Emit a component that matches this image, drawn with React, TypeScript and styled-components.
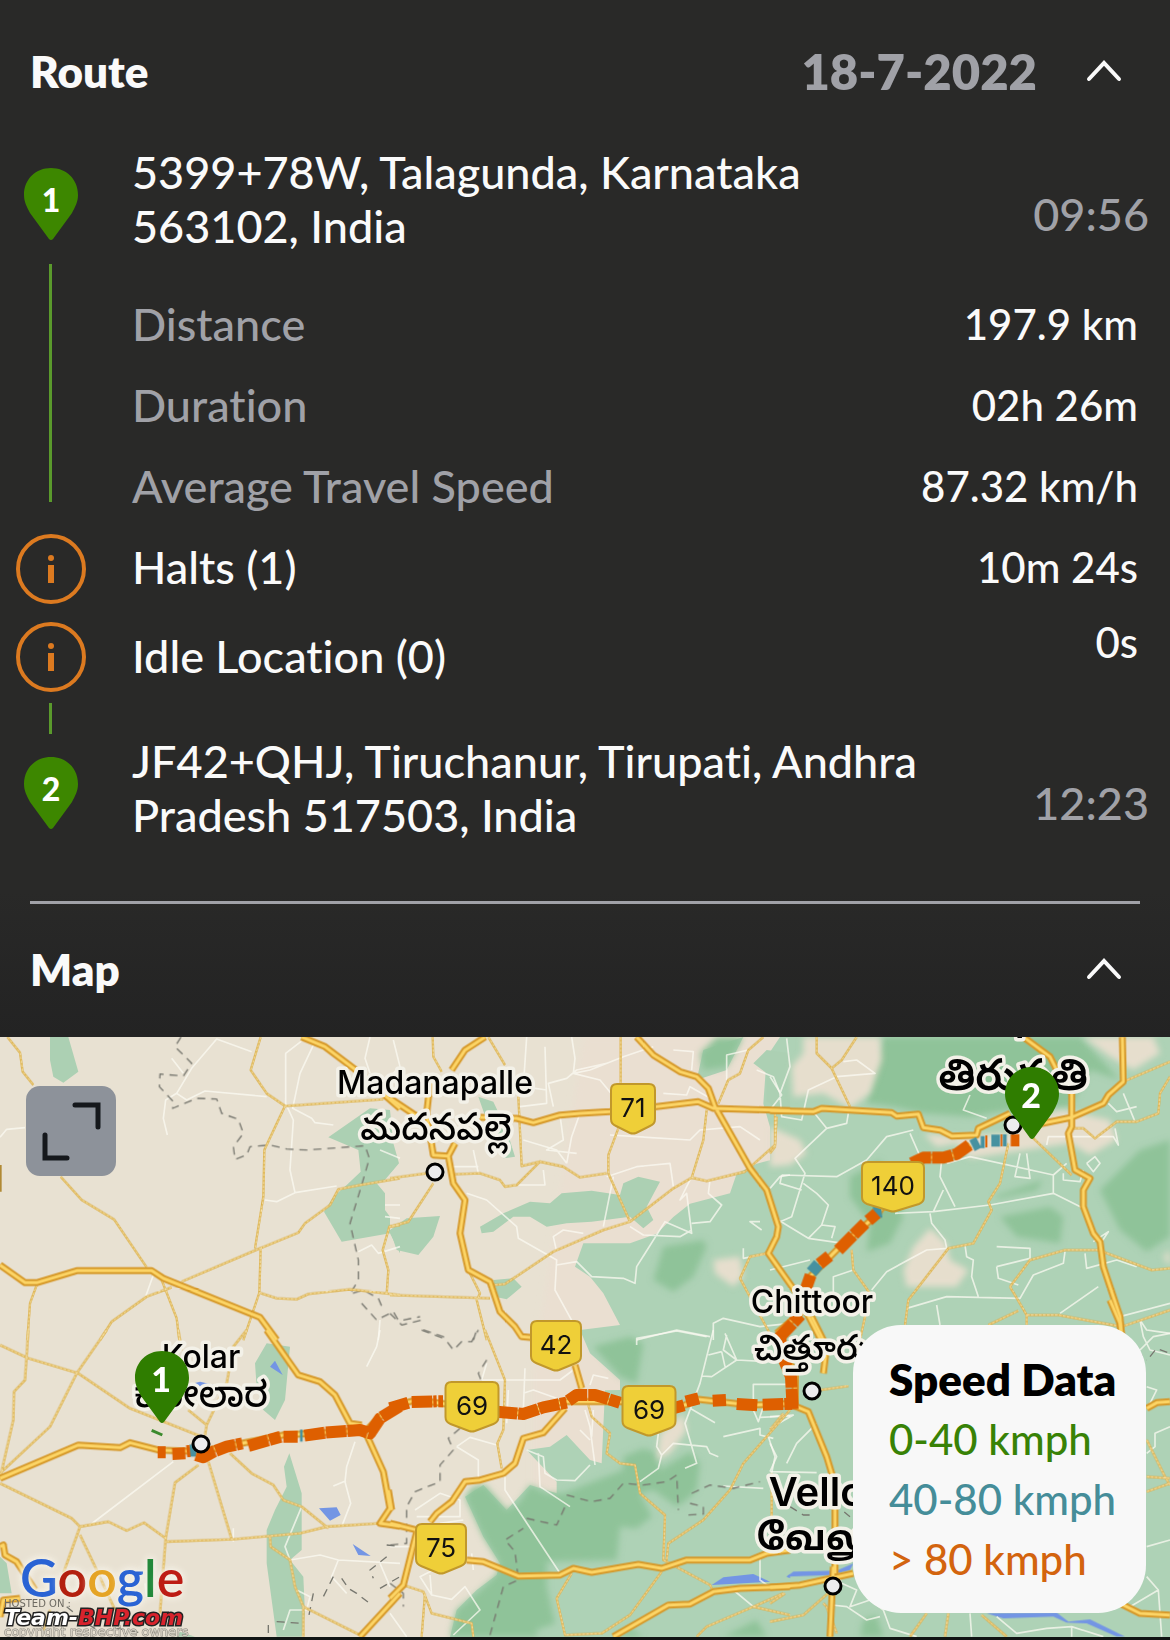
import React, { useState } from "react";
import styled, { createGlobalStyle } from "styled-components";

const color = {
  panel: "#292928",
  panelLow: "#232323",
  text: "#fafafa",
  muted: "#a0a1a7",
  green: "#3d8700",
  rail: "#5a9a2c",
  info: "#dc7a20",
  fast: "#de5f00",
  medium: "#4691a0",
};

const GlobalStyle = createGlobalStyle`
  *, *::before, *::after { box-sizing: border-box; }
  body {
    margin: 0;
    background: #101413;
    color: ${color.text};
    font-family: Lato, "Noto Sans", sans-serif;
    font-variant-ligatures: none;
  }
`;

const Page = styled.main`
  padding-bottom: 3px;
`;

const Panel = styled.div`
  background: linear-gradient(${color.panel} 86%, ${color.panelLow});
`;

const SectionHeader = styled.header<{ $height: number }>`
  display: flex;
  align-items: center;
  height: ${(p) => p.$height}px;
  padding: 0 48px 4px 30px;
`;

const SectionTitle = styled.h2`
  flex: 1;
  margin: 0;
  font-size: 44px;
  line-height: 54px;
  font-weight: 800;
`;

const RouteDate = styled.time`
  margin-right: 49px;
  font-size: 49px;
  line-height: 54px;
  font-weight: 800;
  color: ${color.muted};
`;

const Toggle = styled.button<{ $open: boolean }>`
  display: flex;
  padding: 0;
  border: 0;
  background: none;
  color: ${color.text};
  cursor: pointer;
  svg { transform: ${(p) => (p.$open ? "none" : "rotate(180deg)")}; }
`;

const Row = styled.div<{ $height?: number }>`
  display: grid;
  grid-template-columns: 101px 1fr auto;
  align-items: center;
  min-height: ${(p) => p.$height ?? 81}px;
  padding-right: 32px;
`;

const StopRow = styled(Row)`
  align-items: start;
  min-height: 108px;
  padding-right: 21px;
`;

const RailCell = styled.div`
  display: flex;
  justify-content: center;
`;

const PinCell = styled(RailCell)`
  padding-top: 23px;
`;

const IconCell = styled(RailCell)`
  padding-top: 3px;
`;

const Cell = styled.div<{ $muted?: boolean }>`
  grid-column: 2;
  padding-left: 31px;
  font-size: 45px;
  line-height: 54px;
  font-weight: 500;
  color: ${(p) => (p.$muted ? color.muted : color.text)};
`;

const Address = styled(Cell)`
  max-width: 832px;
`;

const Value = styled.div<{ $raised?: boolean }>`
  font-size: 42px;
  line-height: 54px;
  font-weight: 500;
  padding-bottom: ${(p) => (p.$raised ? 28 : 0)}px;
`;

const StopTime = styled.time`
  margin-top: 42px;
  font-size: 45px;
  line-height: 54px;
  font-weight: 500;
  color: ${color.muted};
`;

const Leg = styled.div`
  display: grid;
  grid-template-columns: 101px 1fr;
`;

const LegStats = styled.div`
  padding-top: 30px;
`;

const StatRow = styled.div`
  display: flex;
  align-items: center;
  justify-content: space-between;
  height: 81px;
  padding-right: 32px;
`;

const Rail = styled.span`
  width: 3px;
  margin: 11px 0 24px;
  background: ${color.rail};
`;

const ShortRail = styled.div`
  display: flex;
  justify-content: center;
  width: 101px;
  height: 31px;
  &::before {
    content: "";
    width: 3px;
    background: ${color.rail};
  }
`;

const Divider = styled.hr`
  height: 3px;
  margin: 59px 30px 0;
  border: 0;
  background: ${color.muted};
`;

const MapFrame = styled.section`
  position: relative;
  aspect-ratio: 1170 / 600;
  overflow: hidden;
  background: #e8e1d2;
`;

const MapLayer = styled.svg`
  position: absolute;
  inset: 0;
  width: 100%;
  height: 100%;
`;

const ExpandButton = styled.button`
  position: absolute;
  left: 26px;
  top: 49px;
  width: 90px;
  height: 90px;
  padding: 0;
  border: 0;
  border-radius: 14px;
  background: #8d929a;
  color: #15181c;
  cursor: pointer;
`;

const Legend = styled.aside`
  position: absolute;
  right: 24px;
  bottom: 24px;
  min-width: 293px;
  padding: 24px 24px 24px 36px;
  border-radius: 48px;
  background: #f8f8f8;
`;

const LegendTitle = styled.h3`
  margin: 0;
  font-size: 44px;
  line-height: 60px;
  font-weight: 800;
  color: #000;
  white-space: nowrap;
`;

const LegendList = styled.ul`
  margin: 0;
  padding: 0;
  list-style: none;
`;

const LegendItem = styled.li<{ $tone: string }>`
  font-size: 42px;
  line-height: 60px;
  font-weight: 500;
  color: ${(p) => p.$tone};
  white-space: nowrap;
`;

const Attribution = styled.div`
  position: absolute;
  left: 4px;
  bottom: 0;
`;

const Brand = styled.div`
  padding-left: 16px;
  font-size: 52px;
  line-height: 44px;
  font-weight: 600;
  text-shadow: 0 0 4px #f4f0e6, 0 0 6px #f4f0e6, 0 0 8px #f4f0e6;
`;

const BrandLetter = styled.span<{ $tone: string }>`
  color: ${(p) => p.$tone};
`;

const HostNote = styled.div`
  font: 10px/10px "DejaVu Sans", sans-serif;
  color: #6d6a62;
`;

const HostName = styled.div`
  font: italic bold 22px/17px "DejaVu Sans", sans-serif;
  color: #fff;
  -webkit-text-stroke: 3px #222;
  paint-order: stroke fill;
  em { color: #d8232c; }
`;

const Owners = styled.div`
  font: 13px/11px "DejaVu Sans", sans-serif;
  color: #d5d0c4;
  -webkit-text-stroke: 1px #8b877e;
  paint-order: stroke fill;
`;

const Chevron = () => (
  <svg width="36" height="24" viewBox="0 0 36 24" aria-hidden="true">
    <path d="M3 20 18 4l15 16" fill="none" stroke="currentColor" strokeWidth="4" strokeLinecap="round" />
  </svg>
);

const pinShape = "M27 0C12 0 0 11 0 27c0 7 3 12 6 18l19 26q2 2 4 0l19-26c3-6 6-11 6-18C54 11 42 0 27 0Z";

const Pin = ({ label }: { label: string }) => (
  <svg width="54" height="72" viewBox="0 0 54 72">
    <path d={pinShape} fill={color.green} />
    <text x="27" y="44" textAnchor="middle" fontSize="32" fontWeight="900" fill="#fff">{label}</text>
  </svg>
);

const InfoIcon = () => (
  <svg width="70" height="70" viewBox="0 0 70 70" aria-hidden="true">
    <circle cx="35" cy="35" r="33" fill="none" stroke={color.info} strokeWidth="4" />
    <circle cx="35" cy="24" r="3" fill={color.info} />
    <rect x="32" y="31" width="6" height="18" fill={color.info} />
  </svg>
);

type Sheet = {
  x: number;
  y: number;
  wood?: string;
  dense?: string;
  land?: string;
  water?: string;
  street?: string;
  border?: string;
  minor?: string;
  major?: string;
  fast?: string;
  medium?: string;
};

// The terrain is surveyed in six overlapping sheets, three drawing units to a pixel.
const sheets: Sheet[] = [
  {
    x: 0, y: -21,
    wood: "M150 21H205L235 125 190 158 160 140 150 90ZM985 322L1110 235 1170 240 1180 340 1197 400 1150 455 1130 460 1155 490V540L1170 560V610L1025 635 972 545 1000 500 1040 465 1082 425 1075 360ZM1165 600H1200V670Z",
    street: "M755 65L650 27 575 115 530 190 560 210 615 183 800 200M515 85L550 130M530 190L497 210 490 265 502 315M915 25L857 70V220L880 270 870 420 885 488 830 515 795 510M945 35L900 130 878 235 935 265 945 278 1000 285M885 488L1010 468M0 322L20 298 75 293M460 735L435 805M1075 665L1115 645 1135 670 1200 650M1110 21L1095 85 1110 130M1155 560L1200 565M1140 360L1200 385M1140 870L1135 930M1155 525H1200",
    border: "M543 21L525 50 575 100 550 138 480 132 478 170 520 215 518 235 590 205 650 207 665 250 715 268 730 310 700 350 705 388 740 375 750 350 810 345 860 357 920 360 1095 347 1108 385 1085 465 1050 580 1075 690V750L1050 792 1090 780 1135 805 1150 840M1085 820L1130 870 1180 845 1200 880",
    minor: "M22 21L60 68 68 125 100 165M182 440L245 510 342 568 440 712M110 765L90 820 82 930M782 21L752 120 800 190 855 228 1150 208M855 228L793 360 790 500 765 655M545 755L780 655 895 608 915 580 990 525 1015 478 1080 465 1200 445M782 655L778 788 730 930M778 788L830 805 890 808 925 792 1050 778 1200 795M1160 792L1165 720 1148 660 1168 590 1200 585M515 772L440 800 335 875 300 930M485 750L530 865 538 930",
    major: "M0 705L75 758H110L230 722H455L490 745 780 862 830 930M905 21L975 50 1065 118 1200 235",
  },
  {
    x: 1170, y: -21,
    wood: "M0 350L25 400 0 430ZM0 600L50 565 150 558 130 620 85 675 20 660ZM265 200L310 215 350 300 375 380 340 385 300 300ZM270 590L340 550 420 515 480 520 515 490 605 482 690 495 700 460 745 440 810 455 770 530 790 570 760 595 720 560 605 575 530 580 470 590 420 560H370L310 605 275 610ZM310 750L370 745 395 770 350 808 315 800ZM920 150L940 60 1060 21 1010 120ZM1090 100L1130 60 1200 70V250L1130 215V130Z",
    dense: "M930 70L980 21H1060L1010 110 940 120ZM820 650L940 630 950 650 910 740 850 785 790 750Z",
    land: "M970 690L1050 680 1060 740 1030 770 975 730Z",
    street: "M10 30L30 110 0 140M410 21L400 170 470 180M545 21L555 85 550 130 600 120M465 50L470 220 390 230M490 230L475 160 530 145 560 120 650 100M550 130L630 150 700 235 760 260M600 120L700 80 790 50M510 255L520 330 470 360 560 370M570 250L545 320 530 400M400 330L500 360 530 400M660 315L900 330 930 300 1050 290 1110 330M650 440L740 410 840 400 850 470M670 440L640 590M230 490L290 510 380 590 385 625 500 690 495 780 550 880 560 930M500 665L490 620 520 600 580 610M500 705L560 695 605 740 700 745 735 760 740 710 825 575 905 610 890 490 870 510 905 440M905 580L960 575 995 525 955 490 960 450M720 590L760 615 870 620 905 600M820 190L890 195 900 170 970 210M850 60L910 65 905 120M1010 150V75L1075 60M1030 230L1150 240M1100 120L1150 140 1170 190M250 360L265 430M385 465H465L460 420M190 410H265M1110 575L1080 575 1115 600M1140 475L1170 440 1200 435M1060 655V685L1135 670M970 930V880L1000 865 1110 890 1200 880M740 930L860 900 960 920",
    border: "M0 850L35 885 95 870M95 900L160 925M250 930L260 900M40 870L90 860",
    minor: "M0 445L110 430M130 460L55 575 0 590M190 433L270 430 330 450 345 470 380 465 450 395 520 410 570 442 650 430M295 21L345 105M128 21L130 80 155 125M385 200L395 408 450 395M692 21V160M685 295L655 375V430L720 575 850 475 905 443 940 330 950 240M905 443L950 453 1065 425 1155 345 1160 260M1120 21L1075 60 1050 130 1015 150 985 220M720 575L640 600 490 665 345 762 310 765M0 795L300 805M240 730L270 790 260 810 290 930M1130 670L1080 680 1050 745 1150 930",
    major: "M0 205L90 265M270 262L380 265 430 278 510 255 570 250 660 245 800 230 925 215 970 235 1200 242M285 21L225 60 185 120M120 160L110 250 130 375 175 378 195 340M175 378L190 460 225 510 210 610 235 720 300 755 330 845 375 890 395 920 450 925M740 21L790 75 870 125 920 140 955 175 975 230 1080 415 1130 480 1165 590 1160 620 1135 670 1220 790 1300 945",
  },
  {
    x: 2310, y: -21,
    dense: "M340 21H930L1050 150 960 120 900 230 720 240 600 260 460 250 370 230 290 220 310 120ZM1200 330L1110 360 990 480 1050 600 1130 665 1200 620ZM690 560L840 530 880 560 870 640 740 620ZM670 500L820 450 800 480 690 505ZM240 440L330 390 400 560 360 640 290 665 300 580 240 500Z",
    land: "M100 21H330L335 90 300 190 240 235 160 190 70 200 65 110 100 70ZM0 290L90 330 110 370 60 405 0 410ZM480 595L530 640 540 690 595 720 560 770H410L400 720 430 650ZM460 310L560 320 720 310 760 260 880 240 1020 270 1040 330 960 375 900 340 600 385 560 340 500 350ZM940 21H1150L1170 70 1090 120 1020 80ZM1180 680L1200 660V710Z",
    street: "M50 25L60 110 30 190 35 260 95 270 115 180 200 140 315 130 260 90 220 95M0 140L35 195 0 240M130 245L170 295 230 280 235 250M170 295L75 385 105 430 65 560 20 580M35 435L200 440 290 390 350 320 430 300M35 435L30 460 95 480M100 460L140 490 175 525 155 585 115 625 25 570M115 625L220 640M155 585L195 590 185 625M600 195L580 240 650 265M420 310L455 390M515 390L510 440 555 530M520 480L490 545 375 550M480 550L485 580 525 630 530 655 470 660 350 725 305 780M490 545L660 525M530 400L600 380 850 435 890 400M850 435V490L940 535M850 490L660 525M750 370L735 440 780 445 770 370M585 645L590 680 610 690 605 740 625 800M680 710L780 685V655L680 650M680 710L685 745 745 765M410 835L530 800 750 805 790 735 880 700 885 665M1100 710L1040 690 950 715 945 670M870 850L985 770M880 430V450L930 455 940 420M950 400L975 380 990 400 970 425 950 400M830 345L835 320 1030 320 1045 345 1035 295M1060 190L1095 275M1015 220L1040 245 1100 230M190 800V740L250 720M970 635L1015 605 985 650M0 720L120 690M500 825L510 885M1050 860L1200 820M1110 870L1130 900 1200 910",
    minor: "M140 21V70L185 115 240 230M260 21L215 90 185 115M15 250V350L0 370M715 340L690 460 655 515 665 540 610 640 535 655 415 810 405 885M785 320L905 435M720 770L780 690 885 660 985 660 1145 720 1200 715M720 770L770 855V885M655 885L745 842M770 855H865L1055 890 1200 840M1060 155L1200 95M910 295H940L975 325 1040 275H1100L1165 250 1170 190 1200 140M245 660L250 720 300 790 270 930",
    major: "M0 242L130 245 155 235 240 240 365 248 380 258 445 252 460 293 510 300 545 318 620 315 625 295 720 250M770 290L905 262 1000 220 1015 195 1060 155 1057 21M760 21L840 80 860 120 905 190V290L895 310 915 420 960 445 940 480V530L970 610 990 635 1000 710 1050 860 1055 930M20 910L90 850 120 740 200 660 320 555 450 385 560 375 600 345",
    fast: "M25 925L92 855M108 775L122 735M148 702L178 678M205 660L285 580M295 572L320 550M425 400L460 383H520L560 372 598 345M646 334H652M692 331H697M722 331H748",
    medium: "M124 727L146 702M310 548L335 545M606 347L626 337M632 336H644M664 332H690M698 331H710",
  },
  {
    x: 0, y: 879,
    wood: "M765 100L800 40 870 50 855 210 825 270 790 240 770 170ZM868 370L905 490V660L870 690 910 740 915 850 905 920H830L800 700V600L825 540 860 470 852 410ZM0 680L20 700 35 790H0ZM540 905L585 920H530Z",
    water: "M810 110L825 92 848 135ZM957 535L1010 532 1022 555 990 572ZM1058 642L1112 678 1075 675ZM560 165L600 155 645 165 600 170Z",
    street: "M520 395L270 585M1140 0L1130 50 1100 110M1065 335L1040 410 1035 455 1052 520 1025 590M1000 468L1038 452M905 530L855 650 870 690 960 675 1015 690 1200 700M1015 690L995 740 1040 790M1140 700L1170 770M890 780L930 800 920 840 870 840 850 900M700 595V635M440 800L435 760",
    border: "M1160 645L1185 648M1160 680L1110 720 1120 745M1000 740L965 810M1025 745L1045 775 1070 790 1115 825M1140 775L1200 740M940 790L925 865M830 875L905 880M805 885V920M200 830L260 880 300 905M350 895L430 910",
    minor: "M0 45L85 85 235 130 390 235 600 318M85 0L75 150 42 185 40 270 0 445M320 0L230 130 150 290 0 430M535 0L545 60M740 0L700 50 680 160 620 285 615 315M565 240L620 285M0 460L215 565 240 590 325 575 380 602 432 578 497 625M240 590L190 730M240 615L290 720 345 840M595 405L525 458 497 625 480 850M625 395L695 628M500 635L700 628 900 610 980 590 1140 580M690 370L755 430 820 465 850 510 905 530 985 595M810 620L812 650 870 690 885 770 910 830 1080 915M910 830V920M150 840L130 900",
    major: "M800 0L895 135 960 155 1005 195 1050 280 1085 285M1100 315L1150 425 1170 535 1140 580 1200 588M0 445L235 345 360 353 390 338 475 360 600 365 850 315 1100 300 1140 260 1200 225M0 650L10 645 15 675 50 695 105 780M0 860L10 810 60 805M1080 920L1200 790",
    fast: "M473 367H497M517 372L556 370M560 364L570 363M588 375L610 382 640 365 680 350 727 340M745 348L842 320M850 320H893M913 317L975 308 1080 300 1110 310 1140 265 1200 228",
    medium: "M568 362H590M900 317H908",
  },
  {
    x: 1170, y: 879,
    dense: "M225 500L250 470 285 465 350 540 385 520 420 465 470 490H520L700 420V380L760 355 800 370 810 420 900 365 930 400 920 480 890 510 860 530 790 480 750 490 785 560 740 595 690 590 680 690 470 695V770L495 880 440 900V920H180L200 840 260 790 320 735 330 700 280 620ZM610 50L720 20 760 40 740 160 690 140ZM1000 920L1100 870 1130 920ZM680 920L720 895 760 920Z",
    land: "M810 310L880 250 890 300 840 370 800 390Z",
    water: "M965 765L1000 742 1090 732 1140 755ZM1190 740L1200 732V745Z",
    street: "M740 45V25L860 3 950 20M970 0L930 160 885 280 920 400 885 415M900 235L975 278M1005 10L1040 90 1000 60 1010 15M955 75L995 65M1040 90L965 140 935 138M1040 90L1130 95M995 65L1005 110M1090 240V163H1190M1090 240L1105 275 1120 230M1200 258L1110 262M1000 320L1110 295V315L1150 325M1135 320L1155 380 1145 430M750 455L805 415 815 375 850 340 950 350 960 370 985 380M805 310L800 350 815 375M585 240L600 290 605 330 615 405M570 300L600 330M610 240L605 320M655 145L610 135 600 165M405 115L400 240M275 150H510L550 120M275 150L290 100M400 190L430 180 500 205M355 180L350 280M200 350L240 322 320 345M200 350L265 390V440M345 430V480L510 730M410 360L460 380 465 430 500 450 555 452 600 405M445 370L450 470 540 530M75 540L150 490 210 510V560L80 560M130 720L90 740 125 795 185 808 225 770 270 840 190 915M125 795L120 735M0 650H60M150 580L220 570M1030 780L1090 830M1110 680V750L1135 768M0 850L50 920M245 670L250 720M1000 468L1120 475",
    border: "M100 0L160 20 190 60 215 35 245 35 265 0M290 90L265 130 275 155M210 295L175 325 190 360 150 405V455L75 485 50 530V640L0 645M0 760L40 790V830M300 915L340 770 385 750 375 665 345 630 400 595M410 565L500 585 525 530M530 495L605 515 660 505 700 460 760 465 830 455 860 435 865 540M900 520L940 530V552L895 555M905 490L960 465 1030 475 1110 455",
    minor: "M285 0L345 150 340 300 322 340 335 415M595 225L605 260 660 310 650 370 690 400 735 405 750 490 825 555 820 690 960 765 970 785M1200 240L1130 320 1060 400 1020 480 940 570 835 640 830 690M815 725L720 855 635 910 525 915 500 805 545 730M920 920L950 890 1090 830 1180 790M1090 830L1200 855M40 765L100 785 125 850 245 880 250 920M105 790L95 920M1145 430V590",
    major: "M0 580L80 600M-5 480L5 540M555 105L575 175M0 805L40 765 80 605M120 575L140 550 185 515 225 455 270 450 340 430 375 400 400 325 460 308 525 235M230 690L280 695 385 738 510 735 550 715 605 727 745 703 815 715 890 690H1080L1130 670 1200 660M670 920L835 825 900 822 970 785 1050 775 1200 770M0 230L80 210 340 245 400 250 520 215 600 215 690 215 860 235 925 208 1080 225 1215 220V130L1180 60",
    fast: "M0 235L55 218M65 216L140 214M145 214H159M320 245L400 252 460 232 530 218M535 212L560 195H615L690 218M850 235L882 226M888 215L926 205M968 212L1008 210M1040 222L1104 226M1118 224L1206 221",
  },
  {
    x: 2310, y: 789,
    water: "M50 830L70 815 200 812 250 790 240 810 180 825ZM650 940L860 938 895 965 960 958 1065 1010H1040L950 970 890 968 850 950 700 955Z",
    dense: "M270 1010L280 960 320 945 340 1010Z",
    street: "M0 350L70 345 0 385M0 515L140 518M0 515L20 470 0 430M50 490L80 430 140 370M195 800L215 850 260 870 240 920 300 900 340 930 360 985 440 1010M185 915L230 920 290 960 330 950M600 940L605 1010M680 950L740 1000 830 985 905 980 1000 1010M1110 60L1120 110 1140 150 1200 165M1110 150L1150 110 1200 100M1140 310L1160 270 1130 260M1200 380L1155 400V440L1130 460M1130 740L1200 720M1130 830L1165 870 1175 1010M1080 920L1165 870M200 535L250 600M905 980V1010",
    border: "M60 620L100 645H125M190 610L240 650M1100 150L1130 180M1140 170L1160 145 1200 160",
    minor: "M150 270L235 258M40 340L0 390M1130 420L1185 530 1200 555M1130 530L1200 535M1130 575L1200 550M470 940L420 1010M535 940L525 1010M635 945L710 1010M0 965L100 945 185 870M45 880L0 910M160 910L170 920 200 1000",
    major: "M125 50L170 140 160 220M60 312L115 335 170 470 185 520 195 620V820M190 800L180 1010M0 862L90 855 250 820M1130 325L1160 308 1200 305M1040 905L1110 940 1200 945M1020 0L1050 70 1055 110",
    fast: "M68 328L63 230 38 170 30 110",
  },
];

const mainland =
  "M1750 619L1890 619 1970 590 2020 540 2070 500 2190 469 2210 410 2270 380 2310 370V270L2290 200 2300 60 2340 0H3510V1800H1350L1370 1719 1430 1659 1490 1614 1500 1579 1450 1499 1395 1379 1450 1344 1520 1419 1590 1344 1670 1369V1334L1580 1239 1650 1229 1700 1194 1770 1269 1805 1279 1815 1060 1860 1059V1029L1770 949 1740 879 1860 864 1810 769 1770 719 1725 689Z";

type LineKey = "street" | "border" | "minor" | "major" | "fast" | "medium";
type FillKey = "wood" | "dense" | "land" | "water";

const Lines = ({ of, ...stroke }: { of: LineKey } & React.SVGProps<SVGGElement>) => (
  <g fill="none" strokeLinejoin="round" {...stroke}>
    {sheets.map((s) => s[of] && <path key={`${s.x} ${s.y}`} d={s[of]} transform={`translate(${s.x} ${s.y})`} />)}
  </g>
);

const Areas = ({ of, ...paint }: { of: FillKey } & React.SVGProps<SVGGElement>) => (
  <g {...paint}>
    {sheets.map((s) => s[of] && <path key={`${s.x} ${s.y}`} d={s[of]} transform={`translate(${s.x} ${s.y})`} />)}
  </g>
);

const Terrain = () => (
  <MapLayer viewBox="0 0 3510 1800" preserveAspectRatio="xMidYMid slice" aria-hidden="true">
    <defs>
      <filter id="soft" x="-5%" y="-5%" width="110%" height="110%">
        <feGaussianBlur stdDeviation="9" />
      </filter>
    </defs>
    <path d="M1750 0H2400V1400H1600V1000Z" fill="#eadfd1" filter="url(#soft)" />
    <path d={mainland} fill="#aed2b6" />
    <Areas of="wood" fill="#acd0b3" />
    <Areas of="dense" fill="#8fc399" filter="url(#soft)" />
    <Areas of="land" fill="#e6decd" filter="url(#soft)" />
    <Areas of="water" fill="#7395e4" />
    <Lines of="street" stroke="#fbf9f1" strokeOpacity="0.75" strokeWidth="5" />
    <Lines of="border" stroke="#77776f" strokeWidth="4" strokeDasharray="24 18" />
    <Lines of="minor" stroke="#dbb04c" strokeWidth="7" />
    <Lines of="minor" stroke="#f8e8b8" strokeWidth="3" strokeDasharray="9 3" />
    <Lines of="major" stroke="#d6992a" strokeWidth="21" />
    <Lines of="major" stroke="#fcd567" strokeWidth="9" />
    <Lines of="medium" stroke={color.medium} strokeWidth="36" />
    <Lines of="fast" stroke={color.fast} strokeWidth="36" strokeDasharray="62 3" />
    <path d="M455 1180L487 1194" stroke="#3b8a2c" strokeWidth="9" />
    <path d="M2 384V464" stroke="#b18a35" strokeWidth="6" />
  </MapLayer>
);

const LabelText = styled.text<{ $size: number; $weight?: number }>`
  font-family: Inter, Roboto, "Noto Sans", "Noto Sans Telugu", "Noto Sans Kannada", "Noto Sans Tamil", sans-serif;
  font-size: ${(p) => p.$size}px;
  font-weight: ${(p) => p.$weight ?? 500};
  text-anchor: middle;
  fill: #000;
  stroke: #f3f1e8;
  stroke-width: 7px;
  stroke-linejoin: round;
  paint-order: stroke;
`;

const ShieldText = styled.text`
  font-family: Inter, Roboto, sans-serif;
  font-size: 26px;
  text-anchor: middle;
  fill: #111;
`;

const labels = [
  { text: "Madanapalle", x: 435, y: 57, size: 32 },
  { text: "మదనపల్లె", x: 436, y: 103, size: 38 },
  { text: "Tirupati", x: 1013, y: -6, size: 36, weight: 600 },
  { text: "తిరుపతి", x: 1013, y: 53, size: 44, weight: 600 },
  { text: "Chittoor", x: 812, y: 276, size: 32 },
  { text: "చిత్తూరు", x: 812, y: 323, size: 36 },
  { text: "Vellore", x: 836, y: 469, size: 40, weight: 600 },
  { text: "வேலூர்", x: 836, y: 513, size: 36, weight: 700 },
  { text: "Kolar", x: 201, y: 331, size: 32 },
  { text: "ಕೋಲಾರ", x: 201, y: 370, size: 36 },
];

const towns = [[435, 135], [1013, 88], [201, 407], [812, 354], [833, 549]];

const shields = [
  { road: "71", x: 633, y: 46, w: 44 },
  { road: "42", x: 556, y: 283, w: 50 },
  { road: "69", x: 472, y: 344, w: 53 },
  { road: "69", x: 649, y: 348, w: 53 },
  { road: "75", x: 441, y: 486, w: 50 },
  { road: "140", x: 893, y: 124, w: 62 },
];

const MapMarks = () => (
  <MapLayer viewBox="0 0 1170 600" preserveAspectRatio="xMidYMid slice">
    {shields.map(({ road, x, y, w }) => {
      const h = w / 2;
      return (
        <g key={`${road}-${x}`} transform={`translate(${x} ${y})`}>
          <path
            d={`M${-h + 6} 1H${h - 6}q6 0 6 6V36q0 5 -5 7L3 50q-3 1 -6 0L${-h + 5} 43q-5 -2 -5 -7V7q0 -6 6 -6Z`}
            fill="#efcf38" stroke="#c1982b" strokeWidth="2"
          />
          <ShieldText y="34">{road}</ShieldText>
        </g>
      );
    })}
    {labels.map((l) => (
      <LabelText key={l.text} x={l.x} y={l.y} $size={l.size} $weight={l.weight}>{l.text}</LabelText>
    ))}
    {towns.map(([x, y]) => (
      <circle key={x} cx={x} cy={y} r="8" fill="#ececee" stroke="#000" strokeWidth="3" />
    ))}
    {[{ n: "1", x: 135, y: 314 }, { n: "2", x: 1005, y: 30 }].map((p) => (
      <g key={p.n} transform={`translate(${p.x} ${p.y})`}>
        <path d={pinShape} fill="#2f7d00" />
        <text x="26" y="41" textAnchor="middle" fontSize="34" fontWeight="900" fill="#fff">{p.n}</text>
      </g>
    ))}
  </MapLayer>
);

const stats = [
  ["Distance", "197.9 km"],
  ["Duration", "02h 26m"],
  ["Average Travel Speed", "87.32 km/h"],
];

const brand = [["G", "#2a63d4"], ["o", "#b3200f"], ["o", "#e5a425"], ["g", "#2a63d4"], ["l", "#23883a"], ["e", "#bd1c14"]];

const Stop = ({ n, address, time }: { n: string; address: string; time: string }) => (
  <StopRow>
    <PinCell><Pin label={n} /></PinCell>
    <Address>{address}</Address>
    <StopTime>{time}</StopTime>
  </StopRow>
);

export default function App() {
  const [routeOpen, setRouteOpen] = useState(true);
  const [mapOpen, setMapOpen] = useState(true);

  return (
    <Page>
      <GlobalStyle />
      <Panel>
        <SectionHeader $height={145}>
          <SectionTitle>Route</SectionTitle>
          <RouteDate>18-7-2022</RouteDate>
          <Toggle $open={routeOpen} aria-label="Toggle route" aria-expanded={routeOpen} onClick={() => setRouteOpen(!routeOpen)}>
            <Chevron />
          </Toggle>
        </SectionHeader>
        {routeOpen && (
          <div>
            <Stop n="1" address="5399+78W, Talagunda, Karnataka 563102, India" time="09:56" />
            <Leg>
              <RailCell><Rail /></RailCell>
              <LegStats>
                {stats.map(([label, value]) => (
                  <StatRow key={label}>
                    <Cell $muted>{label}</Cell>
                    <Value>{value}</Value>
                  </StatRow>
                ))}
              </LegStats>
            </Leg>
            <Row $height={82}>
              <IconCell><InfoIcon /></IconCell>
              <Cell>Halts (1)</Cell>
              <Value>10m 24s</Value>
            </Row>
            <Row $height={95}>
              <IconCell><InfoIcon /></IconCell>
              <Cell>Idle Location (0)</Cell>
              <Value $raised>0s</Value>
            </Row>
            <ShortRail />
            <Stop n="2" address="JF42+QHJ, Tiruchanur, Tirupati, Andhra Pradesh 517503, India" time="12:23" />
          </div>
        )}
        <Divider />
        <SectionHeader $height={133}>
          <SectionTitle>Map</SectionTitle>
          <Toggle $open={mapOpen} aria-label="Toggle map" aria-expanded={mapOpen} onClick={() => setMapOpen(!mapOpen)}>
            <Chevron />
          </Toggle>
        </SectionHeader>
      </Panel>
      {mapOpen && (
        <MapFrame aria-label="Route map">
          <Terrain />
          <MapMarks />
          <ExpandButton aria-label="Expand map">
            <svg width="90" height="90" viewBox="0 0 90 90" fill="none" stroke="currentColor" strokeWidth="5">
              <path d="M49 19H72V41M19 49V72H41" strokeLinecap="round" />
            </svg>
          </ExpandButton>
          <Attribution>
            <Brand>
              {brand.map(([letter, tone], i) => <BrandLetter key={i} $tone={tone}>{letter}</BrandLetter>)}
            </Brand>
            <HostNote>HOSTED ON :</HostNote>
            <HostName>Team-<em>BHP.com</em></HostName>
            <Owners>copyright respective owners</Owners>
          </Attribution>
          <Legend>
            <LegendTitle>Speed Data</LegendTitle>
            <LegendList>
              <LegendItem $tone="#388206">0-40 kmph</LegendItem>
              <LegendItem $tone="#458d99">40-80 kmph</LegendItem>
              <LegendItem $tone="#d3640e">&gt; 80 kmph</LegendItem>
            </LegendList>
          </Legend>
        </MapFrame>
      )}
    </Page>
  );
}
